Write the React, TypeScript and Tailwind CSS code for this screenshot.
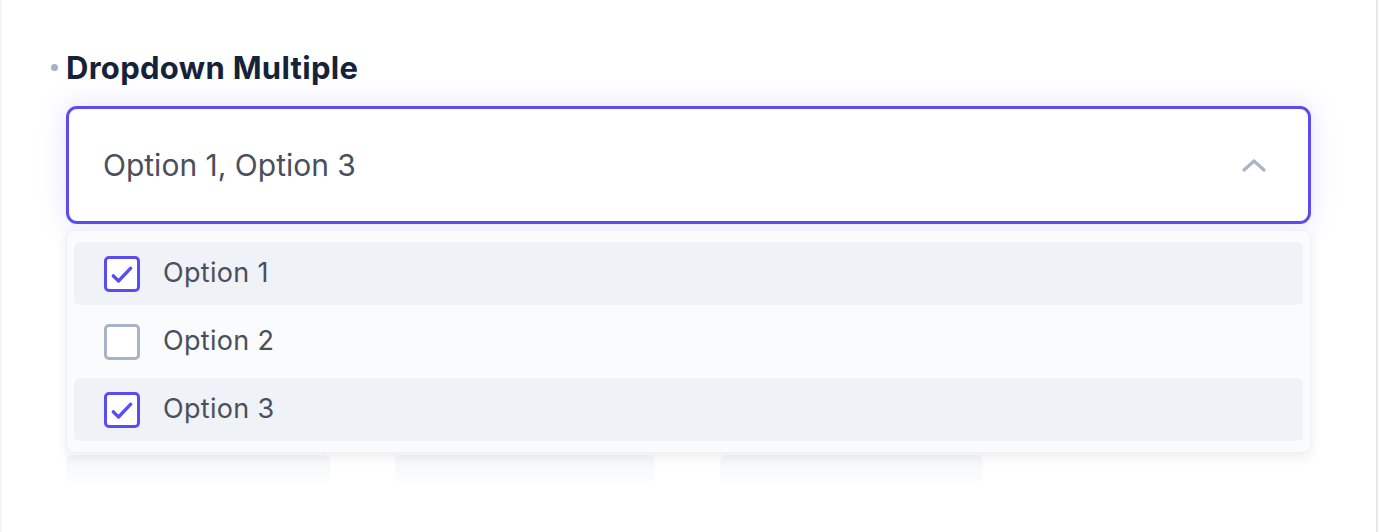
import React from "react";

const Check = () => (
  <svg viewBox="0 0 24 24" className="h-[28px] w-[28px]" fill="none" stroke="#5b4cf2" strokeWidth={2.8} strokeLinecap="round" strokeLinejoin="round">
    <path d="M4.5 13.5l4.5 4.5L19.5 7" />
  </svg>
);

function Item({ label, checked, hl }: { label: string; checked: boolean; hl: boolean }) {
  return (
    <div className={`flex h-[63px] items-center rounded-md pl-[30px] ${hl ? "bg-[#eff2f7]" : ""}`}>
      <div
        className={`flex h-[36px] w-[36px] items-center justify-center rounded-[5px] border-[3px] bg-white ${
          checked ? "border-[#5b4cf2]" : "border-[#a7b4c6]"
        }`}
      >
        {checked && <Check />}
      </div>
      <span className="ml-[23px] text-[27px] tracking-[0.3px] text-[#4b4f5b]">{label}</span>
    </div>
  );
}

export default function App() {
  return (
    <div
      className="relative h-[532px] w-[1380px] overflow-hidden bg-white"
      style={{ fontFamily: "Inter, 'Noto Sans', sans-serif" }}
    >
      <div className="absolute left-0 top-0 h-full w-[2px] bg-[#f3f4f6]" />
      <div className="absolute left-[1376px] top-0 h-full w-[2px] bg-[#e8e8ea]" />
      <div className="pl-[66px] pr-[69px] pt-[50px]">
        <div className="relative flex items-center">
          <span className="absolute -left-[15px] top-[14px] h-[7px] w-[7px] rounded-full bg-[#a6b2c3]" />
          <h2 className="text-[31px] font-bold leading-[36px] tracking-[0.3px] text-[#15233a]">Dropdown Multiple</h2>
        </div>
        <div className="relative mt-[20px]">
          <div className="flex h-[118px] items-center justify-between rounded-[11px] border-[3px] border-[#5b4cf2] bg-white pl-[34px] pr-[42px] shadow-[0_0_28px_rgba(110,90,255,0.18)]">
            <span className="text-[30px] text-[#4b4f5b]">Option 1, Option 3</span>
            <svg viewBox="0 0 24 14" className="h-[14px] w-[24px]" fill="none" stroke="#a9b5c6" strokeWidth={3.2} strokeLinecap="round" strokeLinejoin="round">
              <path d="M2 12L12 3l10 9" />
            </svg>
          </div>
          <div className="h-[260px]" />
          <div className="absolute left-0 top-[349px] flex gap-[65px]">
            <div className="h-[28px] w-[264px] rounded-md bg-gradient-to-b from-[#f5f6f8] to-[#fdfdfe]" />
            <div className="h-[28px] w-[260px] rounded-md bg-gradient-to-b from-[#f5f6f8] to-[#fdfdfe]" />
            <div className="h-[28px] w-[263px] rounded-md bg-gradient-to-b from-[#f5f6f8] to-[#fdfdfe]" />
          </div>
          <div className="absolute left-0 right-0 top-[124px] rounded-[8px] border border-[#eef1f5] bg-[#f9fbfd] px-[7px] pb-[11px] pt-[11px] shadow-[0_4px_12px_rgba(20,30,60,0.08)]">
            <div className="flex flex-col gap-[5px]">
              <Item label="Option 1" checked hl />
              <Item label="Option 2" checked={false} hl={false} />
              <Item label="Option 3" checked hl />
            </div>
          </div>
        </div>
      </div>
    </div>
  );
}
